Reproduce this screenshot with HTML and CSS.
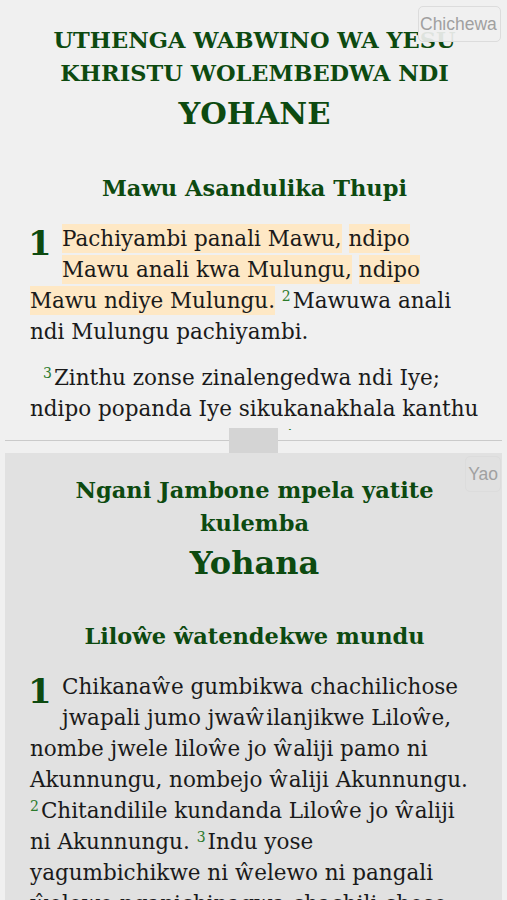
FILE: index.html
```html
<!DOCTYPE html>
<html lang="ny">
<head>
<meta charset="utf-8">
<title>Yohane</title>
<link rel="stylesheet" href="styles.css">
</head>
<body>
<div class="app">
  <section class="pane pane-top">
    <div class="lang lang-top">Chichewa</div>
    <div class="content">
      <h1 class="book-title">UTHENGA WABWINO WA YESU KHRISTU WOLEMBEDWA NDI</h1>
      <div class="book-name">YOHANE</div>
      <h2 class="section-title">Mawu Asandulika Thupi</h2>
      <p class="verse-para first"><span class="chap">1</span><span class="hl">Pachiyambi panali Mawu,</span> <span class="hl">ndipo Mawu anali kwa Mulungu,</span> <span class="hl">ndipo Mawu ndiye Mulungu.</span> <sup class="vn">2</sup>Mawuwa anali ndi Mulungu pachiyambi.</p>
      <p class="verse-para indent"><sup class="vn">3</sup>Zinthu zonse zinalengedwa ndi Iye; ndipo popanda Iye sikukanakhala kanthu kalikonse kolengedwa. <sup class="vn">4</sup>Mwa Iye munali moyo.</p>
    </div>
  </section>
  <div class="divider"><span class="handle"></span></div>
  <section class="pane pane-bottom">
    <div class="lang lang-bottom">Yao</div>
    <div class="content">
      <h1 class="book-title">Ngani Jambone mpela yatite kulemba</h1>
      <div class="book-name">Yohana</div>
      <h2 class="section-title">Liloŵe ŵatendekwe mundu</h2>
      <p class="verse-para first"><span class="chap">1</span>Chikanaŵe gumbikwa chachilichose jwapali jumo jwaŵilanjikwe Liloŵe, nombe jwele liloŵe jo ŵaliji pamo ni Akunnungu, nombejo ŵaliji Akunnungu. <sup class="vn">2</sup>Chitandilile kundanda Liloŵe jo ŵaliji ni Akunnungu. <sup class="vn">3</sup>Indu yose yagumbichikwe ni ŵelewo ni pangali ŵelewo nganichipagwa chachili chose chachagumbikwe.</p>
    </div>
  </section>
</div>
</body>
</html>
```
FILE: styles.css
```css
html, body {
  margin: 0;
  padding: 0;
  background: #f0f0f0;
}
body {
  font-family: "DejaVu Serif", "Liberation Serif", serif;
  color: #1a1a1a;
}
.app {
  width: 507px;
  height: 900px;
  display: flex;
  flex-direction: column;
  overflow: hidden;
}
.pane {
  position: relative;
  overflow: hidden;
}
.pane-top {
  height: 430px;
  flex: none;
  background: #f0f0f0;
}
.pane-bottom {
  flex: 1;
  margin: 0 5px;
  background: #e1e1e1;
}
.pane-top .content {
  padding: 24px 28px 0 30px;
}
.pane-bottom .content {
  padding: 21px 23px 0 25px;
}
.book-title {
  margin: 0;
  text-align: center;
  font-size: 22.5px;
  line-height: 33px;
  font-weight: bold;
  color: #0d4a10;
}
.book-name {
  text-align: center;
  font-size: 32px;
  line-height: 46px;
  font-weight: bold;
  color: #0d4a10;
}
.pane-top .book-name {
  font-size: 30.5px;
}
.section-title {
  margin: 36px 0 0;
  text-align: center;
  font-size: 22.5px;
  line-height: 33px;
  font-weight: bold;
  color: #0d4a10;
}
.pane-bottom .section-title {
  margin-top: 34px;
}
.verse-para {
  margin: 18px 0 0;
  font-size: 21.5px;
  line-height: 31px;
}
.verse-para.indent {
  margin-top: 15px;
  text-indent: 13px;
}
.chap {
  float: left;
  width: 32px;
  margin-left: -2px;
  margin-right: 2px;
  font-size: 34px;
  line-height: 40px;
  font-weight: bold;
  color: #0d4a10;
}
.hl {
  background: #fee8c5;
  padding: 2px 0;
}
.vn {
  font-size: 14px;
  line-height: 0;
  color: #2b7a2b;
  vertical-align: 7px;
  margin-right: 2px;
}
.lang {
  position: absolute;
  right: 6px;
  font-family: "Liberation Sans", Arial, sans-serif;
  color: #a0a0a0;
  border: 1px solid #dcdcdc;
  border-radius: 5px;
  z-index: 2;
}
.lang-top {
  top: 6px;
  padding: 6px 0 6px 1px;
  width: 80px;
  font-size: 17.5px;
  line-height: 22px;
  background: rgba(240, 240, 240, 0.92);
}
.lang-bottom {
  top: 3px;
  right: 1px;
  padding: 6px 2px;
  font-size: 17.5px;
  line-height: 22px;
  background: rgba(225, 225, 225, 0.9);
}
.divider {
  position: relative;
  height: 23px;
  flex: none;
  background: #f0f0f0;
}
.divider::before {
  content: "";
  display: block;
  margin: 10px 5px 0;
  height: 1px;
  background: #cacaca;
}
.handle {
  position: absolute;
  left: 229px;
  top: -2px;
  width: 49px;
  height: 25px;
  background: #d4d4d4;
  z-index: 3;
}
```
